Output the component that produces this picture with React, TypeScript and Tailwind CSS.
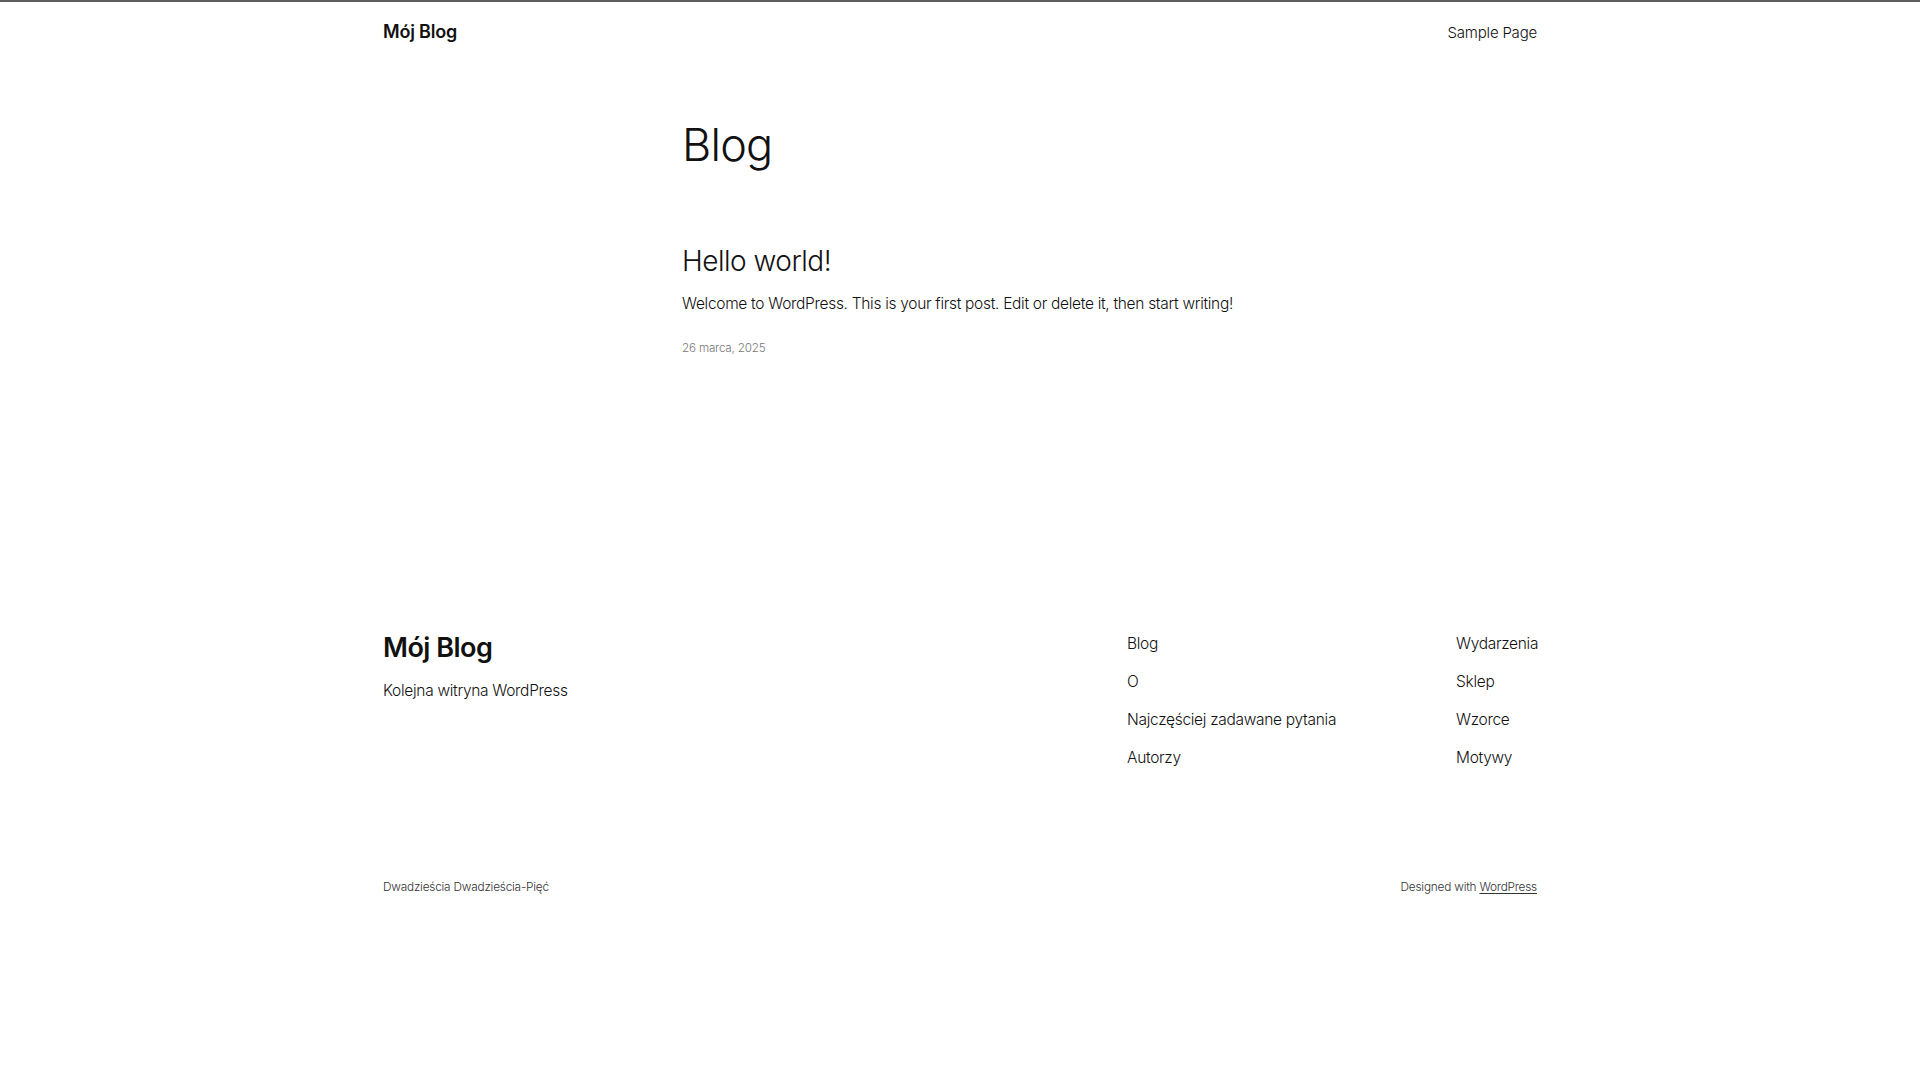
const footerNav = [
  ["Blog", "O", "Najczęściej zadawane pytania", "Autorzy"],
  ["Wydarzenia", "Sklep", "Wzorce", "Motywy"],
];

export default function App() {
  return (
    <div className="min-h-screen bg-white border-t-2 border-[#5e5e5e] text-[#111111] font-['Inter','Liberation_Sans',sans-serif]">
      {/* Site header */}
      <header className="mx-auto w-[1154px] h-[60px] flex items-center justify-between">
        <a href="#" className="text-[18px] leading-none font-semibold tracking-[-0.2px]">
          Mój Blog
        </a>
        <nav>
          <a href="#" className="text-[15px] leading-none font-light tracking-[-0.2px]">
            Sample Page
          </a>
        </nav>
      </header>

      {/* Post list */}
      <main className="mx-auto w-[556px]">
        <h1 className="mt-[60px] text-[45px] leading-none font-light tracking-[-0.8px]">Blog</h1>
        <article>
          <h2 className="mt-[80px] text-[28px] leading-none font-light tracking-[-0.5px]">
            <a href="#">Hello world!</a>
          </h2>
          <p className="mt-[21px] whitespace-nowrap text-[15.5px] leading-none font-light tracking-[-0.3px]">
            Welcome to WordPress. This is your first post. Edit or delete it, then start writing!
          </p>
          <time className="block mt-[31px] text-[11.7px] leading-none font-light text-[#777777] tracking-[-0.2px]">
            26 marca, 2025
          </time>
        </article>
      </main>

      {/* Site footer */}
      <footer className="mx-auto w-[1154px] mt-[280px]">
        <div className="flex">
          <div className="w-[744px] shrink-0">
            <a href="#" className="block text-[27px] leading-none font-semibold tracking-[-0.5px]">
              Mój Blog
            </a>
            <p className="mt-[22px] text-[15.5px] leading-none font-light tracking-[-0.3px]">
              Kolejna witryna WordPress
            </p>
          </div>
          <div className="flex pt-[2px]">
            {footerNav.map((col, i) => (
              <ul key={i} className={i === 0 ? "w-[329px] flex flex-col gap-[22.5px]" : "flex flex-col gap-[22.5px]"}>
                {col.map((item) => (
                  <li key={item} className="text-[15.5px] leading-none font-light tracking-[-0.3px]">
                    <a href="#">{item}</a>
                  </li>
                ))}
              </ul>
            ))}
          </div>
        </div>
        <div className="mt-[116px] flex justify-between text-[11.8px] leading-none font-light text-[#333333] tracking-[-0.2px]">
          <p>Dwadzieścia Dwadzieścia-Pięć</p>
          <p>
            Designed with{" "}
            <a href="#" className="underline underline-offset-2">
              WordPress
            </a>
          </p>
        </div>
      </footer>
    </div>
  );
}
